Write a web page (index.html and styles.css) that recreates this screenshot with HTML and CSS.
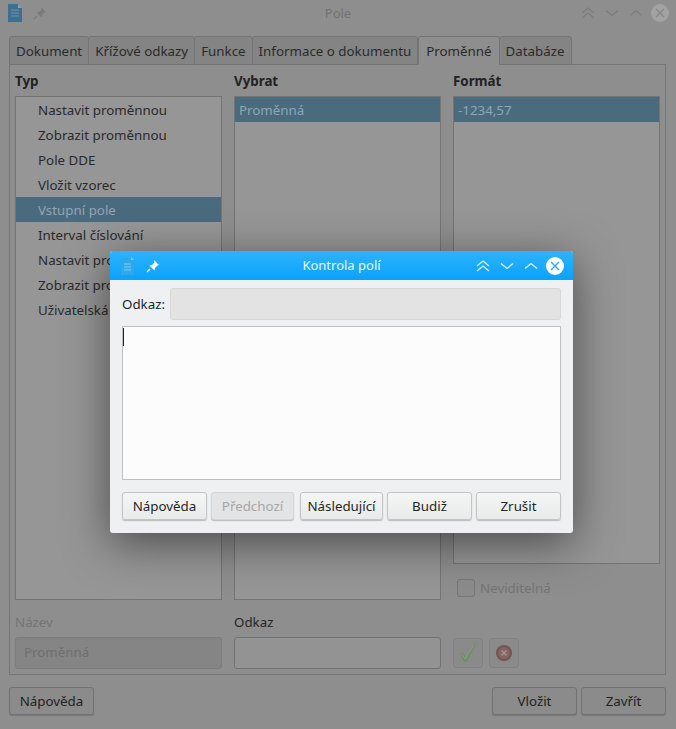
FILE: index.html
```html
<!DOCTYPE html>
<html lang="cs">
<head>
<meta charset="utf-8">
<title>Pole</title>
<link rel="stylesheet" href="styles.css">
</head>
<body>
<div class="window">
  <header class="titlebar">
    <div class="tb-left">
      <svg class="doc" width="14" height="18" viewBox="0 0 14 18"><path d="M0 0h10l4 4v14H0z" fill="#3f6f8f"/><path d="M10 0l4 4h-4z" fill="#8aa"/><path d="M3 6h8M3 9h8M3 12h8" stroke="#6d93ab" stroke-width="1"/></svg>
      <svg class="pin" width="14" height="14" viewBox="0 0 14 14"><path d="M8 1l5 5-1.500 .5-2.500 2.500-.5 2.500-5-5 2.500-.5 2.500-2.500z" fill="#7b7b7b"/><path d="M4 10l-3 3" stroke="#7b7b7b" stroke-width="1.500"/></svg>
    </div>
    <div class="tb-title">Pole</div>
    <div class="tb-right">
      <svg width="16" height="14" viewBox="0 0 16 14" fill="none" stroke="#7c7c7c" stroke-width="1.200"><path d="M2 7l6-5 6 5M2 12l6-5 6 5"/></svg>
      <svg width="16" height="14" viewBox="0 0 16 14" fill="none" stroke="#7c7c7c" stroke-width="1.200"><path d="M2 4.500l6 5 6-5"/></svg>
      <svg width="16" height="14" viewBox="0 0 16 14" fill="none" stroke="#7c7c7c" stroke-width="1.200"><path d="M2 9.500l6-5 6 5"/></svg>
      <svg class="x" width="18" height="18" viewBox="0 0 18 18"><circle cx="9" cy="9" r="9" fill="#a3a3a3"/><path d="M5 5l8 8M13 5l-8 8" stroke="#868686" stroke-width="1.300"/></svg>
    </div>
  </header>

  <nav class="tabs">
    <span class="tab">Dokument</span>
    <span class="tab">Křížové odkazy</span>
    <span class="tab">Funkce</span>
    <span class="tab">Informace o dokumentu</span>
    <span class="tab active">Proměnné</span>
    <span class="tab">Databáze</span>
  </nav>

  <section class="panel">
    <div class="col">
      <h2 class="head">Typ</h2>
      <ul class="list list-tree">
        <li>Nastavit proměnnou</li>
        <li>Zobrazit proměnnou</li>
        <li>Pole DDE</li>
        <li>Vložit vzorec</li>
        <li class="sel">Vstupní pole</li>
        <li>Interval číslování</li>
        <li>Nastavit proměnnou</li>
        <li>Zobrazit proměnnou</li>
        <li>Uživatelská pole</li>
      </ul>
      <div class="lbl dim">Název</div>
      <div class="input disabled">Proměnná</div>
    </div>
    <div class="col">
      <h2 class="head">Vybrat</h2>
      <ul class="list">
        <li class="sel">Proměnná</li>
      </ul>
      <div class="lbl">Odkaz</div>
      <div class="input"></div>
    </div>
    <div class="col">
      <h2 class="head">Formát</h2>
      <ul class="list">
        <li class="sel">-1234,57</li>
      </ul>
      <label class="check dim"><span class="box"></span>Neviditelná</label>
      <div class="tools">
        <span class="tool"><svg width="18" height="20" viewBox="0 0 18 20"><path d="M1 11l3-1 3 4L15 1h2L8 19H5z" fill="#738c6a"/><path d="M3 11l3 5L15 2" fill="none" stroke="#8aa181" stroke-width="1"/></svg></span>
        <span class="tool"><svg width="18" height="18" viewBox="0 0 18 18"><circle cx="9" cy="9" r="8" fill="#735353"/><circle cx="9" cy="9" r="6" fill="#866464"/><path d="M6.500 6.500l5 5M11.500 6.500l-5 5" stroke="#a99696" stroke-width="1.200"/></svg></span>
      </div>
    </div>
  </section>

  <footer class="actions">
    <button class="btn bg">Nápověda</button>
    <span class="spacer"></span>
    <button class="btn bg">Vložit</button>
    <button class="btn bg">Zavřít</button>
  </footer>
</div>

<div class="dialog">
  <header class="d-title">
    <div class="tb-left d-left">
      <svg width="14" height="18" viewBox="0 0 14 18"><path d="M0 1h9l4 4v13H0z" fill="#2fa8ea"/><path d="M10 0l3 3h-3z" fill="#7fd0f8"/><path d="M3 7h7M3 10h7M3 13h7" stroke="#7ccdf7"/></svg>
      <svg width="14" height="14" viewBox="0 0 14 14"><path d="M8 1l5 5-1.500 .5-2.500 2.500-.5 2.500-5-5 2.500-.5 2.500-2.500z" fill="#fff"/><path d="M4 10l-3 3" stroke="#fff" stroke-width="1.500"/></svg>
    </div>
    <div class="tb-title d-name">Kontrola polí</div>
    <div class="tb-right d-right">
      <svg width="16" height="14" viewBox="0 0 16 14" fill="none" stroke="#d8f2ff" stroke-width="1.300"><path d="M2 7l6-5 6 5M2 12l6-5 6 5"/></svg>
      <svg width="16" height="14" viewBox="0 0 16 14" fill="none" stroke="#d8f2ff" stroke-width="1.300"><path d="M2 4.500l6 5 6-5"/></svg>
      <svg width="16" height="14" viewBox="0 0 16 14" fill="none" stroke="#d8f2ff" stroke-width="1.300"><path d="M2 9.500l6-5 6 5"/></svg>
      <svg class="x" width="18" height="18" viewBox="0 0 18 18"><circle cx="9" cy="9" r="9" fill="#fff"/><path d="M5 5l8 8M13 5l-8 8" stroke="#2baaf0" stroke-width="1.400"/></svg>
    </div>
  </header>
  <div class="d-body">
    <div class="d-row">
      <span class="d-lbl">Odkaz:</span>
      <div class="d-ref"></div>
    </div>
    <div class="d-text"><span class="caret"></span></div>
    <div class="d-btns">
      <button class="btn lt">Nápověda</button>
      <button class="btn lt off narrow">Předchozí</button>
      <button class="btn lt narrow next">Následující</button>
      <button class="btn lt">Budiž</button>
      <button class="btn lt">Zrušit</button>
    </div>
  </div>
</div>
</body>
</html>
```
FILE: styles.css
```css
* { box-sizing: border-box; }
html, body { margin: 0; padding: 0; }
body {
  width: 676px;
  height: 729px;
  overflow: hidden;
  position: relative;
  background: #8e8e8e;
  font-family: "Noto Sans", "Open Sans", sans-serif;
  font-size: 13.33px;
  line-height: 19px;
  color: #2a2a2a;
}
.window { height: 729px; display: flex; flex-direction: column; padding: 0 10px 0 9px; }

.titlebar { height: 36px; margin: 0 -10px 0 -9px; padding: 0 7px 10px 8px; display: flex; align-items: center; position: relative; }
.tb-left { display: flex; align-items: center; gap: 11px; }
.tb-right { margin-left: auto; display: flex; align-items: center; gap: 8px; }
.tb-right .x { margin-left: -1px; }
.tb-title { position: absolute; left: 0; right: 0; top: 4px; text-align: center; color: #737373; font-size: 13px; }

.tabs { display: flex; height: 29px; position: relative; z-index: 1; margin-bottom: -1px; }
.tab { padding: 5px 6px 0 6px; background: #848484; border: 1px solid #747474; border-radius: 3px 3px 0 0; color: #2a2a2a; margin-right: -1px; white-space: nowrap; }
.tab.active { background: #8e8e8e; border-bottom-color: #8e8e8e; padding: 5px 7px 0 7px; margin-left: 1px; }

.panel { width: 657px; height: 611px; border: 1px solid #767676; display: grid; grid-template-columns: repeat(3, 207px); column-gap: 12px; padding: 7px 5px 5px 5px; }
.col { display: flex; flex-direction: column; min-height: 0; }
.head { margin: 0 0 4px; font-size: 13.33px; line-height: 19px; font-weight: 700; color: #222; height: 20px; }
.list { margin: 0; padding: 0; list-style: none; flex: 1; border: 1px solid #747474; background: #969696; min-height: 0; }
.list li { height: 25px; line-height: 26px; padding-left: 4px; color: #2a2a2a; white-space: nowrap; overflow: hidden; }
.list-tree li { padding-left: 22px; }
.list li.sel { background: #4a6a7e; color: #90a6b3; }
.lbl { height: 19px; margin: 13px 0 5px; color: #252525; }
.lbl.dim, .dim { color: #747474; }
.input { height: 32px; border: 1px solid #727272; border-radius: 3px; background: #939393; padding: 5px 8px; }
.input.disabled { background: #858585; border-color: #7b7b7b; color: #6e6e6e; }
.check { display: flex; align-items: center; gap: 5px; height: 18px; margin: 15px 0 0 4px; }
.box { width: 18px; height: 18px; border: 1px solid #777; border-radius: 3px; background: #8c8c8c; }
.tools { display: flex; gap: 6px; margin-top: 40px; height: 32px; }
.tool { width: 30px; height: 30px; margin-top: 1px; display: flex; align-items: center; justify-content: center; background: #8a8a8a; border: 1px solid #828282; border-radius: 3px; }

.actions { display: flex; gap: 4px; height: 29px; margin-top: 12px; width: 657px; }
.spacer { flex: 1; }
.btn { font: inherit; height: 28px; width: 85px; padding: 0; border-radius: 3px; color: #222; }
.btn.bg { background: #8b8b8b; border: 1px solid #727272; box-shadow: 0 1px 1px #777; }

.dialog {
  position: absolute; left: 110px; top: 251px; width: 463px; height: 282px;
  background: #eff0f1; border-radius: 3px;
  box-shadow: 0 10px 45px rgba(0, 0, 0, .5);
}
.d-title { height: 29px; background: linear-gradient(#2db3fd, #0ba2fb); border-radius: 3px 3px 0 0; display: flex; align-items: center; padding: 0 9px 0 11px; position: relative; }
.d-left { gap: 11px; }
.d-name { color: #eaf7ff; top: 5px; }
.d-body { padding: 8px 12px 0 12px; }
.d-row { display: flex; align-items: center; gap: 6px; height: 32px; }
.d-lbl { color: #232629; width: 42px; white-space: nowrap; }
.d-ref { flex: 1; height: 32px; background: #e3e3e3; border: 1px solid #d8d8d8; border-radius: 3px; }
.d-text { height: 154px; margin-top: 6px; background: #fcfcfc; border: 1px solid #bfc0c1; padding: 1px 0 0 0; }
.caret { display: block; width: 1px; height: 18px; background: #222; }
.d-btns { display: flex; gap: 4px; margin-top: 12px; }
.btn.lt { background: linear-gradient(#f4f5f5, #e9eaea); border: 1px solid #c3c4c5; box-shadow: 0 1px 1px #bbb; color: #232629; }
.btn.narrow { width: 83px; }
.btn.next { margin-left: 2px; }
.btn.off { background: #e3e4e5; border-color: #d6d6d6; color: #a5a6a7; }
```
